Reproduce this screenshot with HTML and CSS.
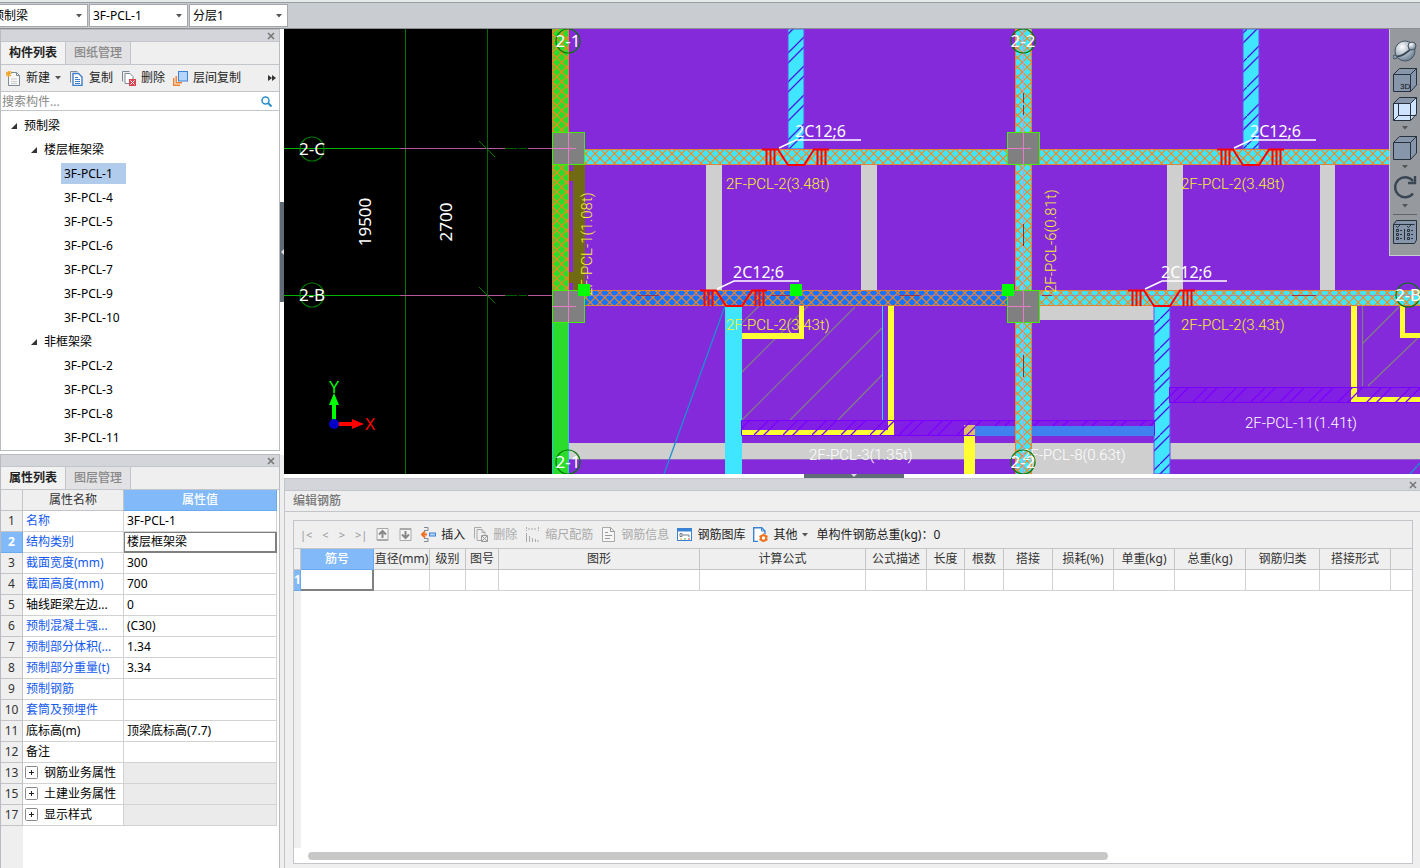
FILE: index.html
```html
<!DOCTYPE html>
<html lang="zh-CN">
<head>
<meta charset="utf-8">
<title>预制梁</title>
<link rel="stylesheet" href="styles.css">
</head>
<body>
<svg class="defs" aria-hidden="true">
  <symbol id="i-close" viewBox="0 0 8 8"><path d="M1 1l6 6M7 1L1 7" stroke="#777" stroke-width="1.6"/></symbol>
  <symbol id="i-caret" viewBox="0 0 6 4"><path d="M0 0h6L3 3.5z" fill="#555"/></symbol>
  <symbol id="i-open" viewBox="0 0 8 8"><path d="M7 1v6H1z" fill="#333"/></symbol>
  <symbol id="i-plus" viewBox="0 0 13 13"><rect x=".5" y=".5" width="12" height="12" rx="1" fill="#fff" stroke="#888"/><path d="M4 6.500h5M6.500 4v5" stroke="#222"/></symbol>
</svg>
<div class="app">
  <header class="topbar">
    <select class="pick pick-type" aria-label="构件类型"><option>预制梁</option></select>
    <select class="pick" aria-label="构件"><option>3F-PCL-1</option></select>
    <select class="pick" aria-label="分层"><option>分层1</option></select>
  </header>
  <div class="work">
    <aside class="side">
      <section class="panel panel-list">
        <div class="strip"><button class="x" aria-label="关闭"><svg><use href="#i-close"/></svg></button></div>
        <div class="tabs"><button class="tab on">构件列表</button><button class="tab">图纸管理</button></div>
        <div class="tools">
          <button class="tool"><svg class="ic" viewBox="0 0 15 15"><path d="M5 1.500h5.500L13.500 4.500v10H2.500V6" fill="#f8f8f8" stroke="#7b8a96"/><path d="M10.500 1.500v3h3" fill="none" stroke="#7b8a96"/><path d="M5 8h6M5 10.500h6M5 12.500h6" stroke="#ccc"/><path d="M0 1l5 4M5 0L0 5M2.500 0v6M0 2.500h5.500" stroke="#f3a223" stroke-width="1.200"/></svg>新建<svg class="caret"><use href="#i-caret"/></svg></button>
          <button class="tool"><svg class="ic" viewBox="0 0 15 15"><path d="M1.500 11.500v-11h7" fill="none" stroke="#7b8a96"/><path d="M4 2.500h5.500L13 6v8.500H4z" fill="#fff" stroke="#3d7cc9" stroke-width="1.400"/><path d="M6 6.500h3M6 8.500h5M6 10.500h5M6 12.500h5" stroke="#3d7cc9"/></svg>复制</button>
          <button class="tool"><svg class="ic" viewBox="0 0 15 15"><path d="M1.500 10.500v-10h7" fill="none" stroke="#7b8a96"/><path d="M8 12.500H4v-10h5L12 5.500V8" fill="#fff" stroke="#7b8a96"/><rect x="8" y="8" width="7" height="7" fill="#d8434e"/><path d="M9.500 9.500l4 4M13.500 9.500l-4 4" stroke="#fff"/></svg>删除</button>
          <button class="tool"><svg class="ic" viewBox="0 0 15 15"><path d="M.7 7v7.300H7M3.200 5v6.800H9" fill="none" stroke="#f0812d" stroke-width="1.400"/><rect x="5.500" y=".5" width="9" height="9.500" fill="#b5d5ff" stroke="#3f82d5"/></svg>层间复制</button>
          <button class="more" aria-label="更多"><svg viewBox="0 0 8 6"><path d="M0 0l4 3-4 3zM4 0l4 3-4 3z" fill="#333"/></svg></button>
        </div>
        <div class="search"><input type="text" placeholder="搜索构件..." aria-label="搜索构件"><svg viewBox="0 0 11 11"><circle cx="4.500" cy="4.500" r="3.500" fill="none" stroke="#2c8fca" stroke-width="1.500"/><path d="M7 7l3.500 3.500" stroke="#2c8fca" stroke-width="2"/></svg></div>
        <ul class="tree">
          <li><span class="node"><svg><use href="#i-open"/></svg>预制梁</span>
            <ul>
              <li><span class="node"><svg><use href="#i-open"/></svg>楼层框架梁</span>
                <ul><li class="leaf"><span class="sel">3F-PCL-1</span></li><li class="leaf">3F-PCL-4</li><li class="leaf">3F-PCL-5</li><li class="leaf">3F-PCL-6</li><li class="leaf">3F-PCL-7</li><li class="leaf">3F-PCL-9</li><li class="leaf">3F-PCL-10</li></ul></li>
              <li><span class="node"><svg><use href="#i-open"/></svg>非框架梁</span>
                <ul><li class="leaf">3F-PCL-2</li><li class="leaf">3F-PCL-3</li><li class="leaf">3F-PCL-8</li><li class="leaf">3F-PCL-11</li></ul></li>
            </ul></li>
        </ul>
      </section>
      <section class="panel panel-props">
        <div class="strip"><button class="x" aria-label="关闭"><svg><use href="#i-close"/></svg></button></div>
        <div class="tabs"><button class="tab on">属性列表</button><button class="tab">图层管理</button></div>
        <div class="props-body">
        <table class="props">
          <colgroup><col class="c-no"><col class="c-name"><col></colgroup>
          <thead><tr><th></th><th>属性名称</th><th class="hl">属性值</th></tr></thead>
          <tbody>
            <tr><th>1</th><td class="link">名称</td><td>3F-PCL-1</td></tr>
            <tr><th class="hl">2</th><td class="link">结构类别</td><td class="cur">楼层框架梁</td></tr>
            <tr><th>3</th><td class="link">截面宽度(mm)</td><td>300</td></tr>
            <tr><th>4</th><td class="link">截面高度(mm)</td><td>700</td></tr>
            <tr><th>5</th><td>轴线距梁左边...</td><td>0</td></tr>
            <tr><th>6</th><td class="link">预制混凝土强...</td><td>(C30)</td></tr>
            <tr><th>7</th><td class="link">预制部分体积(...</td><td>1.34</td></tr>
            <tr><th>8</th><td class="link">预制部分重量(t)</td><td>3.34</td></tr>
            <tr><th>9</th><td class="link">预制钢筋</td><td></td></tr>
            <tr><th>10</th><td class="link">套筒及预埋件</td><td></td></tr>
            <tr><th>11</th><td>底标高(m)</td><td>顶梁底标高(7.7)</td></tr>
            <tr><th>12</th><td>备注</td><td></td></tr>
            <tr><th>13</th><td><button class="exp" aria-label="展开"><svg><use href="#i-plus"/></svg></button>钢筋业务属性</td><td class="off"></td></tr>
            <tr><th>15</th><td><button class="exp" aria-label="展开"><svg><use href="#i-plus"/></svg></button>土建业务属性</td><td class="off"></td></tr>
            <tr><th>17</th><td><button class="exp" aria-label="展开"><svg><use href="#i-plus"/></svg></button>显示样式</td><td class="off"></td></tr>
          </tbody>
        </table>
        </div>
      </section>
    </aside>
    <div class="split-v"><button class="grip grip-v" aria-label="折叠侧栏"><svg viewBox="0 0 4 6"><path d="M4 0v6L1 3z" fill="#ddd"/></svg></button></div>
    <main class="main">
      <div class="canvas">
        <svg class="drawing" viewBox="284 29 1136 445" preserveAspectRatio="xMinYMin slice">
          <defs>
            <pattern id="cross" width="48" height="48" patternUnits="userSpaceOnUse">
              <path d="M-1 -1L49 49M8.600 -1L49 39.400M18.200 -1L49 29.800M27.800 -1L49 20.200M37.400 -1L49 10.600M-1 8.600L39.400 49M-1 18.200L29.800 49M-1 27.800L20.200 49M-1 37.400L10.600 49M49 -1L-1 49M39.400 -1L-1 39.400M29.800 -1L-1 29.800M20.200 -1L-1 20.200M10.600 -1L-1 10.600M49 8.600L8.600 49M49 18.200L18.200 49M49 27.800L27.800 49M49 37.400L37.400 49" stroke="#fa8414" stroke-width="1.100"/>
            </pattern>
            <pattern id="slash" width="29" height="29" patternUnits="userSpaceOnUse"><path d="M-1 30L30 -1M-1 11L11 -1M9 30L30 9" stroke="#4a14e4" stroke-width="1.300"/></pattern>
            <pattern id="slash2" width="29" height="29" patternUnits="userSpaceOnUse"><path d="M-1 30L30 -1M-1 11L11 -1M9 30L30 9" stroke="#7a00ff" stroke-width="1.300"/></pattern>
            <g id="rebar">
              <path d="M762 149.500h16l10 15.500h16l10-15.500h15" fill="none" stroke="#f00" stroke-width="2"/>
              <path d="M766.500 149v16M770.500 149v16M774.500 149v16M817.500 149v16M821.500 149v16M825.500 149v16" stroke="#f00" stroke-width="2"/>
              <path d="M779 148l17-8h65" fill="none" stroke="#fff" stroke-width="1.600"/>
              <text class="cad-note" x="795" y="137">2C12;6</text>
            </g>
            <g id="column"><rect x=".5" y=".5" width="32" height="32" fill="#808080" stroke="#40f000"/><path d="M16.500 0v33M0 16.500h24" stroke="#e87cc8"/></g>
            <circle id="bubble" r="12" fill="none" stroke="#007a00" stroke-width="1.200"/>
          </defs>
          <rect x="284" y="29" width="1136" height="445" fill="#000"/>
          <rect x="568" y="29" width="852" height="445" fill="#842adb"/>

          <g stroke-width="1">
            <path d="M405.500 29v445" stroke="#007a00"/><path d="M487.500 29v445" stroke="#006800"/>
            <path d="M284 148.500h116M284 295.500h116" stroke="#00b400"/>
            <path d="M400 148.500h105M528 148.500h24M400 295.500h105M528 295.500h24" stroke="#b8589c"/>
            <path d="M505 148.500h12M519 148.500h8M505 295.500h12M519 295.500h8" stroke="#006000"/>
            <path d="M479 141l16 16M479 287l16 16" stroke="#007a00"/>
          </g>

          <g fill="#cfcfcf">
            <path d="M706 165h16v125h-16zM861 165h16v125h-16zM1167 165h16v125h-16zM1320 165h15v125h-15z"/>
            <path d="M569 443h851v16H569zM1032 443h122v31h-122zM1040 306h114v14h-114z"/>
          </g>
          <path d="M569 459.500h395M1170 459.500h250" stroke="#8f64c8"/>

          <path d="M573 165h12v125h-12zM569 171h4v10h-4zM569 272h4v11h-4z" fill="#706a14"/>

          <rect x="552" y="29" width="16" height="445" fill="#2cdc2c"/>
          <path d="M552 29h16v103h-16zM552 165h16v125h-16z" fill="url(#cross)"/>
          <path d="M552.500 29v103M568.500 29v103M552.500 165v125M568.500 165v125" stroke="#f08020"/>
          <path d="M552.500 322v152M568.500 322v152" stroke="#20d0d0"/>

          <path d="M725 306h17v168h-17zM788 29h16v120h-16zM1243 29h16v120h-16zM1154 306h16v168h-16z" fill="#40e6ff"/>
          <path d="M788 29h16v120h-16zM1243 29h16v120h-16zM1154 306h16v168h-16z" fill="url(#slash)" stroke="#6b4cf0"/>
          <path d="M725 306l-61 168M1410 474l10-11" stroke="#1a90d0" stroke-width="1.300"/>

          <path d="M742 323l17-17M742 372l66-66M742 420l113-113M790 420l92-92M838 420l44-45M1362 344l38-38M1368 386l52-50M1362.500 306v80" stroke="#808080" stroke-width="1.200"/>
          <path d="M882.500 306v114" stroke="#20e0ff"/>
          <path d="M799 306h5v33h-62v-6h57zM888 306h6v129H742v-5h146zM964 425h11v49h-11zM1351 306h6v91h63v6h-69zM1400 306h5v27h15v5h-20z" fill="#ff3"/>
          <path d="M742 421h146v9H742zM894 421h260v15H894z" fill="#7a00ff" opacity=".25"/>
          <path d="M741.500 420.500h413v15h-413z" fill="url(#slash2)" stroke="#7a00ff"/>
          <path d="M975 426h179v10H975z" fill="#4080f0"/>
          <path d="M1170 388h181v14h-181z" fill="#7a00ff" opacity=".25"/>
          <path d="M1169.500 387.500h251v15h-251z" fill="url(#slash2)" stroke="#7a00ff"/>
          <path d="M1015 29h17v103h-17zM1015 165h17v125h-17zM1015 322h17v152h-17z" fill="#40e6ff"/>
          <path d="M1015 29h17v103h-17zM1015 165h17v125h-17zM1015 322h17v152h-17z" fill="url(#cross)"/>
          <path d="M1015.500 29v103M1031.500 29v103M1015.500 165v125M1031.500 165v125M1015.500 322v152M1031.500 322v152" stroke="#f08020"/>
          <path d="M1023.500 29v445" stroke="#d890d0"/>
          <path d="M1023.500 93v10M1023.500 105v10M1023.500 224v22M1023.500 355v22" stroke="#b02020"/>

          <path d="M585 149h835v16H585zM1040 290h380v16h-380z" fill="#40e6ff"/>
          <path d="M585 290h422v16H585z" fill="#1672ff"/>
          <path d="M585 149h835v16H585zM585 290h835v16H585z" fill="url(#cross)"/>
          <path d="M585 149.500h835M585 164.500h835M585 290.500h835M585 305.500h835" stroke="#e08438"/>
          <path d="M585 295.500h835" stroke="#b078a8" opacity=".7"/>
          <path d="M637 295.500h22M771 295.500h22M899 295.500h22M1042 295.500h10M1292 295.500h24" stroke="#a03050"/>

          <use href="#column" x="552" y="132"/><use href="#column" x="552" y="290"/>
          <use href="#column" x="1007" y="132"/><use href="#column" x="1007" y="290"/>

          <use href="#rebar"/><use href="#rebar" x="455"/><use href="#rebar" x="-62" y="141"/><use href="#rebar" x="366" y="141"/>

          <g class="cad-label yellow">
            <text x="726" y="189">2F-PCL-2(3.48t)</text><text x="1181" y="189">2F-PCL-2(3.48t)</text>
            <text x="726" y="330">2F-PCL-2(3.43t)</text><text x="1181" y="330">2F-PCL-2(3.43t)</text>
            <text transform="translate(592 296) rotate(-90)">2F-PCL-1(1.08t)</text>
            <text transform="translate(1056 293) rotate(-90)">2F-PCL-6(0.81t)</text>
          </g>
          <g class="cad-label white">
            <text x="809" y="460">2F-PCL-3(1.35t)</text><text x="1022" y="460">2F-PCL-8(0.63t)</text><text x="1245" y="428">2F-PCL-11(1.41t)</text>
          </g>
          <path d="M578 284h12v12h-12zM790 284h12v12h-12zM1002 284h12v12h-12z" fill="#0f0"/>
          <use href="#bubble" x="312" y="149"/><use href="#bubble" x="312" y="295"/><use href="#bubble" x="568" y="41"/><use href="#bubble" x="568" y="462"/><use href="#bubble" x="1023" y="41"/><use href="#bubble" x="1023" y="462"/><use href="#bubble" x="1408" y="295"/>
          <g class="cad-axis">
            <text x="312" y="155">2-C</text><text x="312" y="301">2-B</text><text x="568" y="47">2-1</text><text x="568" y="468">2-1</text><text x="1023" y="47">2-2</text><text x="1023" y="468">2-2</text><text x="1408" y="301">2-B</text>
            <text transform="translate(371 222) rotate(-90)">19500</text><text transform="translate(452 222) rotate(-90)">2700</text>
          </g>
          <path d="M334 424v-22" stroke="#0f0" stroke-width="4"/><path d="M334 393l5 12h-10z" fill="#0f0"/>
          <path d="M334 424h18" stroke="#f00" stroke-width="4"/><path d="M364 424l-12-5v10z" fill="#f00"/>
          <circle cx="334" cy="424" r="5" fill="#0000c8"/>
          <text class="ucs" x="334" y="393" fill="#0f0">Y</text><text class="ucs" x="370" y="430" fill="#f00">X</text>
        </svg>
        <nav class="views" aria-label="视图">
          <button aria-label="动态观察"><svg viewBox="0 0 24 24"><defs><radialGradient id="orb" cx=".35" cy=".3" r=".8"><stop offset="0" stop-color="#fff"/><stop offset="1" stop-color="#60758c"/></radialGradient></defs><circle cx="12" cy="12" r="10" fill="url(#orb)" stroke="#445464"/><path d="M2 17c5 2 14-4 17-9" fill="none" stroke="#394654" stroke-width="1.800"/><circle cx="19" cy="7" r="4" fill="url(#orb)" stroke="#445464"/><circle cx="2" cy="18" r="2" fill="#8b9aa8" stroke="#445464"/></svg></button>
          <button aria-label="三维"><svg viewBox="0 0 24 24"><path d="M.5 6.500L6.500.5h17V17l-6 6.500H.5z" fill="#8796aa" stroke="#26313d"/><path d="M.5 6.500h17v17M17.500 6.500l6-6" fill="none" stroke="#26313d"/><text class="tri" x="7" y="21">3D</text></svg></button>
          <button aria-label="线框"><svg viewBox="0 0 24 24"><path d="M.5 6.500L6.500.5h17V17l-6 6.500H.5z" fill="#cfe5ff" stroke="#26313d"/><path d="M.5 6.500L6.500.5h17l-6 6z" fill="#8796aa" stroke="#26313d"/><path d="M17.500 6.500v17M5.500 6.500v12h18M5.500 18.500l-5 5" fill="none" stroke="#26313d"/></svg><svg class="vc"><use href="#i-caret"/></svg></button>
          <button aria-label="实体"><svg viewBox="0 0 24 24"><path d="M.5 6.500L6.500.5h17V17l-6 6.500H.5z" fill="#8796aa" stroke="#26313d"/><path d="M.5 6.500h17v17M17.500 6.500l6-6" fill="none" stroke="#26313d"/></svg><svg class="vc"><use href="#i-caret"/></svg></button>
          <button aria-label="旋转"><svg viewBox="0 0 24 24"><path d="M20 18.500A10 10 0 1 1 20 6" fill="none" stroke="#394654" stroke-width="2.400"/><path d="M22 1v7h-7" fill="none" stroke="#394654" stroke-width="2.400"/></svg><svg class="vc"><use href="#i-caret"/></svg></button>
          <hr>
          <button aria-label="显示设置"><svg viewBox="0 0 24 24"><path d="M.5 4.500L3.500.5h20V20l-2 3.500H.5z" fill="#8796aa" stroke="#26313d"/><path d="M.5 4.500h21M11.500 9v11M3 6l1.500 1.500L7 5M14 6l1.500 1.500L18 5M7 10.500h2M7 14.500h2M7 18.500h2M18 10.500h2M18 14.500h2M18 18.500h2" fill="none" stroke="#26313d"/><path d="M3.500 9.500h2v2h-2zM3.500 13.500h2v2h-2zM3.500 17.500h2v2h-2zM14.500 9.500h2v2h-2zM14.500 13.500h2v2h-2zM14.500 17.500h2v2h-2z" fill="none" stroke="#26313d"/></svg></button>
        </nav>
      </div>
      <div class="split-h"><button class="grip grip-h" aria-label="折叠面板"><svg viewBox="0 0 6 4"><path d="M0 0h6L3 3z" fill="#ddd"/></svg></button></div>
      <section class="dock">
        <div class="strip"><button class="x" aria-label="关闭"><svg><use href="#i-close"/></svg></button></div>
        <h2 class="dock-title">编辑钢筋</h2>
        <div class="box">
          <div class="tools bar">
            <span class="nav"><button disabled>|&lt;</button><button disabled>&lt;</button><button disabled>&gt;</button><button disabled>&gt;|</button></span>
            <button class="tool" aria-label="上移"><svg class="ic" viewBox="0 0 15 15"><path d="M2 1.500h11v12H2z" fill="#f4f4f4" stroke="#aaa"/><path d="M7.500 11V4M4 7.500L7.500 4 11 7.500" fill="none" stroke="#888" stroke-width="2"/><path d="M2 13h11" stroke="#aaa" stroke-width="2"/></svg></button>
            <button class="tool" aria-label="下移"><svg class="ic" viewBox="0 0 15 15"><path d="M2 1.500h11v12H2z" fill="#f4f4f4" stroke="#aaa"/><path d="M7.500 4v7M4 7.500L7.500 11 11 7.500" fill="none" stroke="#888" stroke-width="2"/><path d="M2 2h11" stroke="#aaa" stroke-width="2"/></svg></button>
            <button class="tool"><svg class="ic" viewBox="0 0 15 15"><path d="M3 .5h4v3H3M3 11.500h4v3H3" fill="none" stroke="#7b8a96"/><path d="M6 7.500H2M4 4.500l-3 3 3 3" fill="none" stroke="#f07020" stroke-width="2"/><rect x="8.500" y="6" width="6" height="3" fill="#b5d5ff" stroke="#3f82d5"/></svg>插入</button>
            <button class="tool" disabled><svg class="ic" viewBox="0 0 15 15"><path d="M1.500 11.500v-11h7M8 13.500H4v-11h5L12 5.500V8" fill="none" stroke="#aaa"/><path d="M9 2.500v3h3" fill="none" stroke="#aaa"/><path d="M8.500 8.500h6v6h-6zM9 9l5 5M14 9l-5 5" fill="none" stroke="#999"/></svg>删除</button>
            <button class="tool" disabled><svg class="ic" viewBox="0 0 15 15"><path d="M1.500 0v4M13.500 0v4M3 2h9" stroke="#aaa" stroke-dasharray="2 1"/><path d="M1.500 6v9M4.500 9v6M7.500 11v4M10.500 12v3M13 13v2" stroke="#aaa"/></svg>缩尺配筋</button>
            <button class="tool" disabled><svg class="ic" viewBox="0 0 15 15"><path d="M1.500.5h8l4 4v10h-12z" fill="#f6f6f6" stroke="#aaa"/><path d="M9.500.5v4h4M4 5.500h3M4 8.500h7M4 11.500h5" fill="none" stroke="#999"/></svg>钢筋信息</button>
            <button class="tool"><svg class="ic" viewBox="0 0 15 15"><rect x=".5" y="1.500" width="14" height="12" fill="#fff" stroke="#3a82d4"/><path d="M1 3h13" stroke="#3a82d4" stroke-width="3"/><path d="M3 6.500h2v3H3zM5 8h7v2" fill="none" stroke="#6e7f8c"/><path d="M3 12h2" stroke="#f0b020"/><path d="M7 12h2" stroke="#4b4"/><path d="M11 12h2" stroke="#e44"/></svg>钢筋图库</button>
            <button class="tool"><svg class="ic" viewBox="0 0 15 15"><path d="M5 14.500H.7V.7h8L12 4v3" fill="#fff" stroke="#3a82d4" stroke-width="1.400"/><path d="M8.500.7V4H12" fill="none" stroke="#3a82d4"/><circle cx="10.500" cy="11" r="2.800" fill="#fff" stroke="#f07020" stroke-width="2"/><path d="M10.500 6.500v2M10.500 13.500V15M6.500 9l2 1M12.500 10l2-1M6.500 13l2-1M12.500 12l2 1" stroke="#f07020" stroke-width="1.500"/></svg>其他<svg class="caret"><use href="#i-caret"/></svg></button>
            <span class="total">单构件钢筋总重(kg)：0</span>
          </div>
          <div class="sheet-body">
          <table class="sheet">
            <colgroup><col class="w7"><col class="w73"><col class="w56"><col class="w36"><col class="w33"><col class="w201"><col class="w166"><col class="w61"><col class="w38"><col class="w39"><col class="w49"><col class="w61"><col class="w61"><col class="w71"><col class="w74"><col class="w71"><col></colgroup>
            <thead><tr><th></th><th class="hl">筋号</th><th>直径(mm)</th><th>级别</th><th>图号</th><th>图形</th><th>计算公式</th><th>公式描述</th><th>长度</th><th>根数</th><th>搭接</th><th>损耗(%)</th><th>单重(kg)</th><th>总重(kg)</th><th>钢筋归类</th><th>搭接形式</th><th></th></tr></thead>
            <tbody><tr><th class="hl">1</th><td class="cur2"></td><td></td><td></td><td></td><td></td><td></td><td></td><td></td><td></td><td></td><td></td><td></td><td></td><td></td><td></td><td></td></tr></tbody>
          </table>
          </div>
          <div class="scroll"><div class="thumb"></div></div>
        </div>
      </section>
    </main>
  </div>
</div>
</body>
</html>
```
FILE: styles.css
```css
* { box-sizing: border-box; }
body { margin: 0; font: 12px/16px "Noto Sans", "Noto Sans CJK SC", sans-serif; color: #000; background: #efefef; }
button, input, select { font: inherit; color: inherit; margin: 0; padding: 0; border: 0; background: none; border-radius: 0; }
ul { list-style: none; margin: 0; padding: 0; }
svg { display: block; flex: none; }
.defs { position: absolute; width: 0; height: 0; }
.app { display: flex; flex-direction: column; height: 100vh; overflow: hidden; }

.topbar { display: flex; gap: 1px; flex: none; height: 29px; padding-top: 2px; border-top: 2px solid #e4e9ea; border-bottom: 1px solid #8c8f92; background: #c9ccd1; box-shadow: inset 0 1px #999da2; overflow: hidden; }
.pick { appearance: none; width: 99px; height: 23px; padding-left: 3px; border: 1px solid #a4a6a9; background: #fff url("data:image/svg+xml,%3Csvg xmlns='http://www.w3.org/2000/svg' width='6' height='4'%3E%3Cpath d='M0 0h6L3 3.500z' fill='%23555'/%3E%3C/svg%3E") no-repeat right 5px center; }
.pick-type { width: 97px; margin-left: -9px; padding-left: 0; }

.work { display: flex; flex: 1; min-height: 0; }
.side { display: flex; flex-direction: column; gap: 3px; width: 280px; flex: none; background: #fff; }
.panel { display: flex; flex-direction: column; border: 1px solid #b8bbc0; background: #efefef; }
.panel-props { flex: 1; min-height: 0; border-bottom: 0; }
.strip { display: flex; justify-content: flex-end; align-items: center; flex: none; height: 12px; padding-right: 4px; background: #d3d5da; border-bottom: 1px solid #c2c5ca; }
.x svg { width: 8px; height: 8px; }
.tabs { display: flex; flex: none; height: 22px; }
.tab { width: 65px; background: #e2e2e4; color: #888; border-right: 1px solid #c2c5ca; font-weight: 500; }
.tab.on { background: #f2f2f2; color: #222; font-weight: 700; }
.tools { display: flex; align-items: center; gap: 8px; flex: none; height: 28px; padding-left: 5px; border-top: 1px solid #c2c5ca; border-bottom: 1px solid #c2c5ca; color: #222; white-space: nowrap; }
.tool { display: flex; align-items: center; gap: 5px; }
.tool:disabled { color: #aaa; }
.ic { width: 15px; height: 15px; }
.caret { width: 6px; height: 4px; }
.more { margin-left: auto; margin-right: 3px; }
.more svg { width: 8px; height: 6px; }
.search { display: flex; align-items: center; height: 19px; padding-right: 7px; background: #fff; border-bottom: 1px solid #c2c5ca; }
.search input { flex: 1; min-width: 0; height: 18px; padding-left: 1px; outline: 0; }
.search input::placeholder { color: #888; opacity: 1; }
.search svg { width: 11px; height: 11px; }

.tree { padding: 3px 0 0 9px; background: #fff; line-height: 24px; }
.tree ul { padding-left: 20px; }
.node { display: flex; align-items: center; gap: 6px; height: 24px; }
.node svg { width: 8px; height: 8px; }
.tree .leaf { height: 24px; padding: 1px 0 2px 14px; line-height: 21px; }
.sel { display: block; width: 65px; margin-left: -3px; padding-left: 3px; background: #b1cbed; }

.props-body { flex: 1; min-height: 0; overflow: hidden; padding-right: 2px; background: linear-gradient(90deg, #efefef 22px, #fff 22px); border-top: 1px solid #c2c5ca; }
table { border-collapse: separate; border-spacing: 0; table-layout: fixed; width: 100%; }
th, td { height: 21px; padding: 0; font-weight: 400; border-right: 1px solid #d2d2d2; border-bottom: 1px solid #d2d2d2; white-space: nowrap; overflow: hidden; line-height: 16px; }
th { background: #efefef; color: #333; border-color: #c4c4c6; }
td { background: #fff; padding-left: 3px; }
.c-no { width: 22px; }
.c-name { width: 101px; }
.link { color: #145aee; }
.hl { background: #82baf9; color: #fff; font-weight: 700; border-color: #6aa9ee; }
thead .hl { font-weight: 500; }
.cur { box-shadow: inset 1px 1px #808080, inset -1px -1px #808080; border-color: #808080; }
.off { background: #ebebeb; }
.exp { float: left; margin: 1px 6px 0 -1px; }
.exp svg { width: 13px; height: 13px; }

.split-v { display: flex; align-items: flex-start; width: 4px; flex: none; background: linear-gradient(#fff 426px, #efefef 426px); }
.grip { display: flex; align-items: center; justify-content: center; background: #5f6c76; }
.grip svg { width: 6px; height: 4px; }
.grip-v { width: 4px; height: 100px; margin-top: 173px; }
.grip-v svg { width: 4px; height: 6px; }
.main { display: flex; flex-direction: column; flex: 1; min-width: 0; }
.canvas { position: relative; flex: none; height: 445px; background: #000; overflow: hidden; }
.drawing { width: 100%; height: 100%; }
.cad-label { font: 300 15px Roboto, sans-serif; }
.yellow { fill: #f8f428; }
.white { fill: #fff; }
.cad-note { font: 16px "Noto Sans", sans-serif; fill: #fff; }
.cad-axis { font: 17px "Noto Sans", sans-serif; fill: #fff; text-anchor: middle; }
.ucs { font: 16px "Liberation Sans", sans-serif; text-anchor: middle; }
.views { position: absolute; top: 0; right: 0; display: flex; flex-direction: column; align-items: center; gap: 5px; width: 31px; padding: 10px 0 11px; background: #96999d; border-left: 1px solid #c8cacc; border-bottom: 1px solid #c8cacc; }
.views button svg { width: 24px; height: 24px; }
.views button .vc { width: 6px; height: 4px; margin: 5px auto 1px; }
.views hr { width: 24px; margin: 0; border: 0; border-top: 1px solid #62666a; }
.tri { font: 8px "Liberation Sans", sans-serif; fill: #111; }
.split-h { display: flex; justify-content: center; flex: none; height: 4px; padding-left: 4px; background: #fff; }
.grip-h { width: 100px; height: 4px; }

.dock { display: flex; flex-direction: column; flex: 1; min-height: 0; border-top: 1px solid #c2c5ca; border-left: 1px solid #c2c5ca; }
.dock .strip { padding-right: 3px; }
.dock-title { margin: 0; flex: none; height: 21px; padding-left: 8px; font-size: 12px; line-height: 20px; font-weight: 500; color: #777; border-bottom: 1px solid #c2c5ca; }
.box { display: flex; flex-direction: column; flex: 1; min-height: 0; margin: 8px 7px 4px 8px; border: 1px solid #c2c5ca; }
.bar { border-top: 0; }
.nav { display: flex; gap: 10px; padding-left: 1px; font-size: 11px; color: #999; }
.sheet-body { flex: 1; min-height: 0; background: linear-gradient(90deg, #efefef 7px, #fff 7px); }
.sheet th, .sheet td { text-align: center; }
.sheet th:last-child, .sheet td:last-child { border-right: 0; }
.sheet .cur2 { border-right: 2px solid #808080; border-bottom: 2px solid #808080; }
.w7 { width: 7px; } .w33 { width: 33px; } .w36 { width: 36px; } .w38 { width: 38px; } .w39 { width: 39px; }
.w49 { width: 49px; } .w56 { width: 56px; } .w61 { width: 61px; } .w71 { width: 71px; } .w73 { width: 73px; }
.w74 { width: 74px; } .w166 { width: 166px; } .w201 { width: 201px; }
.scroll { flex: none; height: 15px; padding: 4px 0 0 14px; background: #fff; }
.thumb { width: calc(100% - 304px); height: 8px; border-radius: 4px; background: #c8c8c8; }
```
